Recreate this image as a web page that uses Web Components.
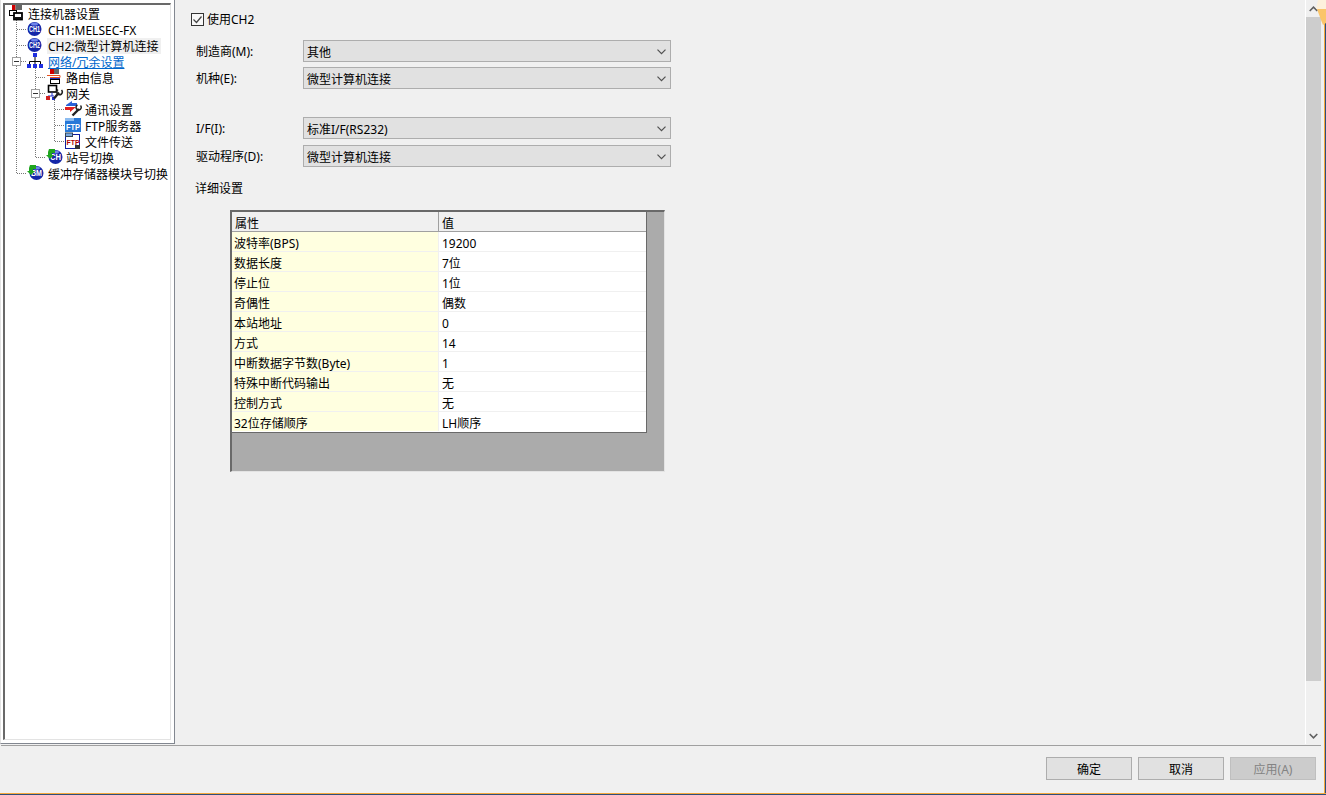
<!DOCTYPE html>
<html lang="zh">
<head>
<meta charset="utf-8">
<title>连接机器设置</title>
<style>
    html, body { margin:0; padding:0; background:#f0f0f0; overflow:hidden; }
    body { font:12px "Noto Sans", "Noto Sans CJK SC", sans-serif; color:#000; }
</style>
</head>
<body>

<conn-window>
    <device-tree slot="tree">
        <tree-row icon="root" level="0">连接机器设置</tree-row>
        <tree-row icon="ch1" level="1">CH1:MELSEC-FX</tree-row>
        <tree-row icon="ch2" level="1" selected>CH2:微型计算机连接</tree-row>
        <tree-row icon="net" level="1" link>网络/冗余设置</tree-row>
        <tree-row icon="route" level="2">路由信息</tree-row>
        <tree-row icon="gate" level="2">网关</tree-row>
        <tree-row icon="comm" level="3">通讯设置</tree-row>
        <tree-row icon="ftp" level="3">FTP服务器</tree-row>
        <tree-row icon="file" level="3">文件传送</tree-row>
        <tree-row icon="ch" level="2">站号切换</tree-row>
        <tree-row icon="bm" level="1">缓冲存储器模块号切换</tree-row>
    </device-tree>

    <settings-pane slot="pane">
        <check-line>使用CH2</check-line>
        <field-group>
            <combo-field label="制造商(M):" value="其他"></combo-field>
            <combo-field label="机种(E):" value="微型计算机连接"></combo-field>
        </field-group>
        <field-group>
            <combo-field label="I/F(I):" value="标准I/F(RS232)"></combo-field>
            <combo-field label="驱动程序(D):" value="微型计算机连接"></combo-field>
        </field-group>
        <section-title>详细设置</section-title>
        <prop-grid>
            <prop-row name="波特率(BPS)">19200</prop-row>
            <prop-row name="数据长度">7位</prop-row>
            <prop-row name="停止位">1位</prop-row>
            <prop-row name="奇偶性">偶数</prop-row>
            <prop-row name="本站地址">0</prop-row>
            <prop-row name="方式">14</prop-row>
            <prop-row name="中断数据字节数(Byte)">1</prop-row>
            <prop-row name="特殊中断代码输出">无</prop-row>
            <prop-row name="控制方式">无</prop-row>
            <prop-row name="32位存储顺序">LH顺序</prop-row>
        </prop-grid>
    </settings-pane>

    <v-scroll slot="scroll"></v-scroll>

    <dlg-button slot="buttons">确定</dlg-button>
    <dlg-button slot="buttons">取消</dlg-button>
    <dlg-button slot="buttons" disabled>应用(A)</dlg-button>
</conn-window>

<script>
const BALL = (label, cx, cy) => `
    <circle cx="${cx}" cy="${cy}" r="7" fill="#1426a8"/>
    <ellipse cx="${cx}" cy="${cy - 5}" rx="3.5" ry="1.6" fill="#6f84ea"/>
    <text x="${cx}" y="${cy + 3}" text-anchor="middle" textLength="11" lengthAdjust="spacingAndGlyphs" font-family="Liberation Sans, sans-serif" font-size="8.5" font-weight="700" fill="#fff">${label}</text>`;

const GREEN_ARROW = `<path d="M3 -1h6v4H6v2h2L4 9 0 5h2V2z" fill="#1fa51f"/>`;

const ICONS = {
    root: `<rect x="4" y="-1" width="3.5" height="5" fill="#d00000"/><rect x="7.5" y="-1" width="6.5" height="5" fill="#666"/>
           <rect x="1.5" y="4.5" width="7" height="5" fill="#fff" stroke="#000"/>
           <rect x="6" y="7" width="8" height="6.5" fill="#fff" stroke="#000" stroke-width="1.8"/>
           <rect x="7" y="11" width="6" height="2.5" fill="#111"/>`,
    ch1: BALL("CH1", 7.5, 7),
    ch2: BALL("CH2", 7.5, 7),
    net: `<rect x="6" y="-1" width="4" height="4" fill="#1f2fe0"/><path d="M8 3v7M2.5 10V7.5h11V10" fill="none" stroke="#000"/>
          <rect x="0" y="10" width="4" height="4" fill="#1f2fe0"/><rect x="6" y="10" width="4" height="4" fill="#1f2fe0"/><rect x="12" y="10" width="4" height="4" fill="#1f2fe0"/>`,
    route: `<rect x="4" y="-1" width="4" height="5" fill="#d00000"/><rect x="8" y="-1" width="5" height="5" fill="#666"/>
            <path d="M1 5.5h13v2H4" fill="none" stroke="#e8501c"/><path d="M4 8.5h10" fill="none" stroke="#2030c0"/>
            <rect x="4.5" y="9.5" width="9" height="4" fill="#fff" stroke="#000"/>`,
    gate: `<rect x="2.5" y="-.5" width="8" height="6.5" fill="#fff" stroke="#000" stroke-width="1.6"/><path d="M6 6.5v3.5M2 10h6" stroke="#2030d0" fill="none"/>
           <rect x="0" y="10" width="4" height="4" fill="#d02020"/><rect x="6" y="11" width="3" height="3" fill="#2030d0"/>
           <path d="M13 6.5L8 12.5" fill="none" stroke="#222" stroke-width="2.4"/><path d="M15.5 4a2.8 2.8 0 1 1-3.4-.4" fill="none" stroke="#222" stroke-width="1.6"/>`,
    comm: `<path d="M1 3l6-4v2h5v3H1z" fill="#2a62d8"/><path d="M0 5h11L5 10V8H0z" fill="#e02020"/>
           <path d="M14 7L7.5 13.5" fill="none" stroke="#222" stroke-width="2.4"/><path d="M15.5 3.5a2.6 2.6 0 1 1-3-0.5" fill="none" stroke="#222" stroke-width="1.5"/>`,
    ftp: `<rect x="0" y="0" width="16" height="14" fill="#2878d8"/><rect x="0" y="0" width="9" height="3" fill="#8cbcf0"/>
          <text x="8" y="11.5" text-anchor="middle" textLength="14" lengthAdjust="spacingAndGlyphs" font-family="Liberation Sans, sans-serif" font-size="8.5" font-weight="700" fill="#fff">FTP</text>`,
    file: `<rect x="0.5" y="0.5" width="14" height="14" fill="#fff" stroke="#1020a0"/><rect x="0.5" y="-1" width="7" height="3.5" fill="#7aa8e0" stroke="#345"/>
           <text x="8" y="10.5" text-anchor="middle" textLength="13" lengthAdjust="spacingAndGlyphs" font-family="Liberation Sans, sans-serif" font-size="8" font-weight="700" fill="#b00000">FTP</text>
           <rect x="10" y="11" width="5" height="4" fill="#333"/>`,
    ch: `${BALL("CH", 9.5, 7)}${GREEN_ARROW}`,
    bm: `${BALL("BM", 9.5, 7)}${GREEN_ARROW}`
};

class ConnWindow extends HTMLElement {
    constructor() {
        super();
        this.attachShadow({mode: "open"});
    }

    connectedCallback() {
        this.shadowRoot.innerHTML = `
            <style>
                :host { display:block; width:1326px; height:795px; background:#f0f0f0; position:relative; box-sizing:border-box;
                        border-bottom:1px solid #2f4f7a; }
                #stripe { position:absolute; left:0; right:0; bottom:0; height:1px; background:#f5a83c; }
                #edge { position:absolute; top:0; right:0; bottom:0; width:4px; background:linear-gradient(90deg,#f0f0f0 0 2px,#f5a83c 2px 3px,#2f4f7a 3px); }
                #corner { position:absolute; top:0; right:0; }
                #top { display:grid; grid-template-columns:175px 1fr 16px; height:745px; padding-right:5px; box-sizing:border-box; }
                #foot { border-top:1px solid #a0a0a0; margin:0 5px 0 1px; display:flex; justify-content:flex-end; gap:6px; padding:11px 5px 0 0; }
            </style>
            <div id="top">
                <slot name="tree"></slot>
                <slot name="pane"></slot>
                <slot name="scroll"></slot>
            </div>
            <div id="foot"><slot name="buttons"></slot></div>
            <div id="edge"></div>
            <div id="stripe"></div>
            <svg id="corner" width="10" height="26" viewBox="0 0 10 26">
                <path d="M1 9h9v14L7 25 5 20z" fill="#fbc56a"/><path d="M2 0h8v9H0z" fill="#fdf1dc"/>
            </svg>
        `;
    }
}

class DeviceTree extends HTMLElement {
    constructor() {
        super();
        this.attachShadow({mode: "open"});
    }

    connectedCallback() {
        this.shadowRoot.innerHTML = `
            <style>
                :host { display:block; height:744px; box-sizing:border-box; background:#fff; position:relative;
                        border-left:1px solid #e3e3e3; border-right:1px solid #828790; border-bottom:1px solid #828790; padding:1px; }
                #inner { height:calc(100% - 4px); box-sizing:border-box; border:1px solid #e3e3e3; border-left:2px solid #696969; border-top:2px solid #696969;
                         margin:2px 2px 2px 1px; padding-top:1px; position:relative; }
                svg { position:absolute; left:-5px; top:-5px; }
                #rows { position:relative; }
                .box { fill:#fff; stroke:#a0a0a0; }
            </style>
            <div id="inner">
                <svg width="170" height="190" viewBox="0 0 170 190">
                    <g fill="none" stroke="#777" stroke-dasharray="1 1">
                        <path d="M16.5 20v154M17 29.5h10M17 45.5h10M17 61.5h10M17 173.5h10"/>
                        <path d="M35.5 66v92M36 77.5h10M36 93.5h10M36 157.5h10"/>
                        <path d="M54.5 98v44M55 109.5h10M55 125.5h10M55 141.5h10"/>
                    </g>
                    <rect class="box" x="12.5" y="57.5" width="8" height="8"/><path d="M14 61.5h5" stroke="#333"/>
                    <rect class="box" x="31.5" y="89.5" width="8" height="8"/><path d="M33 93.5h5" stroke="#333"/>
                </svg>
                <div id="rows"><slot></slot></div>
            </div>
        `;
    }
}

class TreeRow extends HTMLElement {
    constructor() {
        super();
        this.attachShadow({mode: "open"});
    }

    connectedCallback() {
        const level = +this.getAttribute("level");
        this.shadowRoot.innerHTML = `
            <style>
                :host { display:flex; align-items:flex-start; height:16px; white-space:nowrap;
                        padding-left:${[3, 22, 41, 60][level]}px; }
                svg { width:16px; height:16px; flex:none; overflow:visible; }
                span { margin-left:${[3, 4, 3, 3][level]}px; padding:0 2px 0 1px; height:16px; line-height:18px; }
                :host([selected]) span { background:#f0f0f0; }
                :host([link]) span { color:#0066cc; text-decoration:underline; }
            </style>
            <svg viewBox="0 0 16 16">${ICONS[this.getAttribute("icon")]}</svg>
            <span><slot></slot></span>
        `;
    }
}

class SettingsPane extends HTMLElement {
    constructor() {
        super();
        this.attachShadow({mode: "open"});
    }

    connectedCallback() {
        this.shadowRoot.innerHTML = `
            <style>
                :host { display:block; padding:12px 0 0 16px; }
            </style>
            <slot></slot>
        `;
    }
}

class CheckLine extends HTMLElement {
    constructor() {
        super();
        this.attachShadow({mode: "open"});
    }

    connectedCallback() {
        this.shadowRoot.innerHTML = `
            <style>
                :host { display:flex; align-items:center; gap:3px; height:15px; margin-bottom:13px; color:#000; }
                svg { flex:none; }
                span { margin-top:-2px; }
            </style>
            <svg width="13" height="13" viewBox="0 0 13 13">
                <rect x=".5" y=".5" width="12" height="12" fill="#f8f8f8" stroke="#333"/>
                <path d="M2.5 6.5l3 3 5-6" fill="none" stroke="#444" stroke-width="1.2"/>
            </svg>
            <span><slot></slot></span>
        `;
    }
}

class FieldGroup extends HTMLElement {
    constructor() {
        super();
        this.attachShadow({mode: "open"});
    }

    connectedCallback() {
        this.shadowRoot.innerHTML = `
            <style>
                :host { display:flex; flex-direction:column; gap:5px; margin-bottom:28px; padding-left:5px; }
                :host(:last-of-type) { margin-bottom:0; gap:6px; }
            </style>
            <slot></slot>
        `;
    }
}

class ComboField extends HTMLElement {
    constructor() {
        super();
        this.attachShadow({mode: "open"});
    }

    connectedCallback() {
        this.shadowRoot.innerHTML = `
            <style>
                :host { display:grid; grid-template-columns:107px 368px; align-items:center; height:22px; }
                #box { height:22px; box-sizing:border-box; border:1px solid #adadad; background:#e1e1e1; display:flex; align-items:center;
                       justify-content:space-between; padding:0 4px 0 3px; }
                #box span { margin-top:2px; }
                #box svg { margin-top:1px; }
            </style>
            <div id="label">${this.getAttribute("label")}</div>
            <div id="box">
                <span>${this.getAttribute("value")}</span>
                <svg width="9" height="6" viewBox="0 0 9 6"><path d="M.5.7L4.5 4.7 8.5.7" fill="none" stroke="#505050" stroke-width="1.2"/></svg>
            </div>
        `;
    }
}

class SectionTitle extends HTMLElement {
    constructor() {
        super();
        this.attachShadow({mode: "open"});
    }

    connectedCallback() {
        this.shadowRoot.innerHTML = `
            <style>
                :host { display:block; margin:13px 0 14px 4px; height:16px; line-height:18px; }
            </style>
            <slot></slot>
        `;
    }
}

class PropGrid extends HTMLElement {
    constructor() {
        super();
        this.attachShadow({mode: "open"});
    }

    connectedCallback() {
        this.shadowRoot.innerHTML = `
            <style>
                :host { display:block; margin-left:39px; width:435px; height:262px; box-sizing:border-box; background:#ababab;
                        border-top:2px solid #696969; border-left:2px solid #696969; border-right:1px solid #e3e3e3; border-bottom:1px solid #e3e3e3; }
                #table { width:415px; box-sizing:border-box; border-right:1px solid #696969; border-bottom:1px solid #696969; background:#fff; }
                #head { display:grid; grid-template-columns:207px 1fr; grid-template-rows:19px; height:20px; box-sizing:border-box; line-height:20px; background:#f0f0f0;
                        border-bottom:1px solid #a0a0a0; }
                #head div { padding:2px 0 0 3px; box-sizing:border-box; }
                #head div:first-child { border-right:1px solid #a0a0a0; }
            </style>
            <div id="table">
                <div id="head"><div>属性</div><div>值</div></div>
                <slot></slot>
            </div>
        `;
    }
}

class PropRow extends HTMLElement {
    constructor() {
        super();
        this.attachShadow({mode: "open"});
    }

    connectedCallback() {
        this.shadowRoot.innerHTML = `
            <style>
                :host { display:grid; grid-template-columns:207px 1fr; grid-template-rows:19px; height:20px; box-sizing:border-box; line-height:17px;
                        border-bottom:1px solid #f0f0f0; white-space:nowrap; }
                :host(:last-child) { border-bottom:none; }
                #name { background:#ffffe0; padding:3px 0 0 2px; box-sizing:border-box; border-right:1px solid #f0f0f0; }
                #val { padding:3px 0 0 3px; box-sizing:border-box; }
            </style>
            <div id="name">${this.getAttribute("name")}</div>
            <div id="val"><slot></slot></div>
        `;
    }
}

class VScroll extends HTMLElement {
    constructor() {
        super();
        this.attachShadow({mode: "open"});
    }

    connectedCallback() {
        this.shadowRoot.innerHTML = `
            <style>
                :host { display:flex; flex-direction:column; height:744px; width:16px; box-sizing:border-box; background:#f0f0f0; border-left:1px solid #fff; }
                .arrow { height:17px; display:flex; align-items:center; justify-content:center; flex:none; }
                #thumb { height:664px; background:#cdcdcd; flex:none; }
            </style>
            <div class="arrow"><svg width="9" height="6" viewBox="0 0 9 6"><path d="M.7 5L4.5 1.2 8.3 5" fill="none" stroke="#606060" stroke-width="1.6"/></svg></div>
            <div id="thumb"></div>
            <div style="flex:1"></div>
            <div class="arrow"><svg width="9" height="6" viewBox="0 0 9 6"><path d="M.7 1L4.5 4.8 8.3 1" fill="none" stroke="#606060" stroke-width="1.6"/></svg></div>
        `;
    }
}

class DlgButton extends HTMLElement {
    constructor() {
        super();
        this.attachShadow({mode: "open"});
    }

    connectedCallback() {
        this.shadowRoot.innerHTML = `
            <style>
                :host { display:flex; align-items:center; justify-content:center; width:86px; height:23px; box-sizing:border-box;
                        border:1px solid #adadad; background:#e1e1e1; }
                :host([disabled]) { background:#cccccc; border-color:#bfbfbf; color:#838383; }
            </style>
            <slot></slot>
        `;
    }
}

customElements.define("conn-window", ConnWindow);
customElements.define("device-tree", DeviceTree);
customElements.define("tree-row", TreeRow);
customElements.define("settings-pane", SettingsPane);
customElements.define("check-line", CheckLine);
customElements.define("field-group", FieldGroup);
customElements.define("combo-field", ComboField);
customElements.define("section-title", SectionTitle);
customElements.define("prop-grid", PropGrid);
customElements.define("prop-row", PropRow);
customElements.define("v-scroll", VScroll);
customElements.define("dlg-button", DlgButton);
</script>
</body>
</html>
